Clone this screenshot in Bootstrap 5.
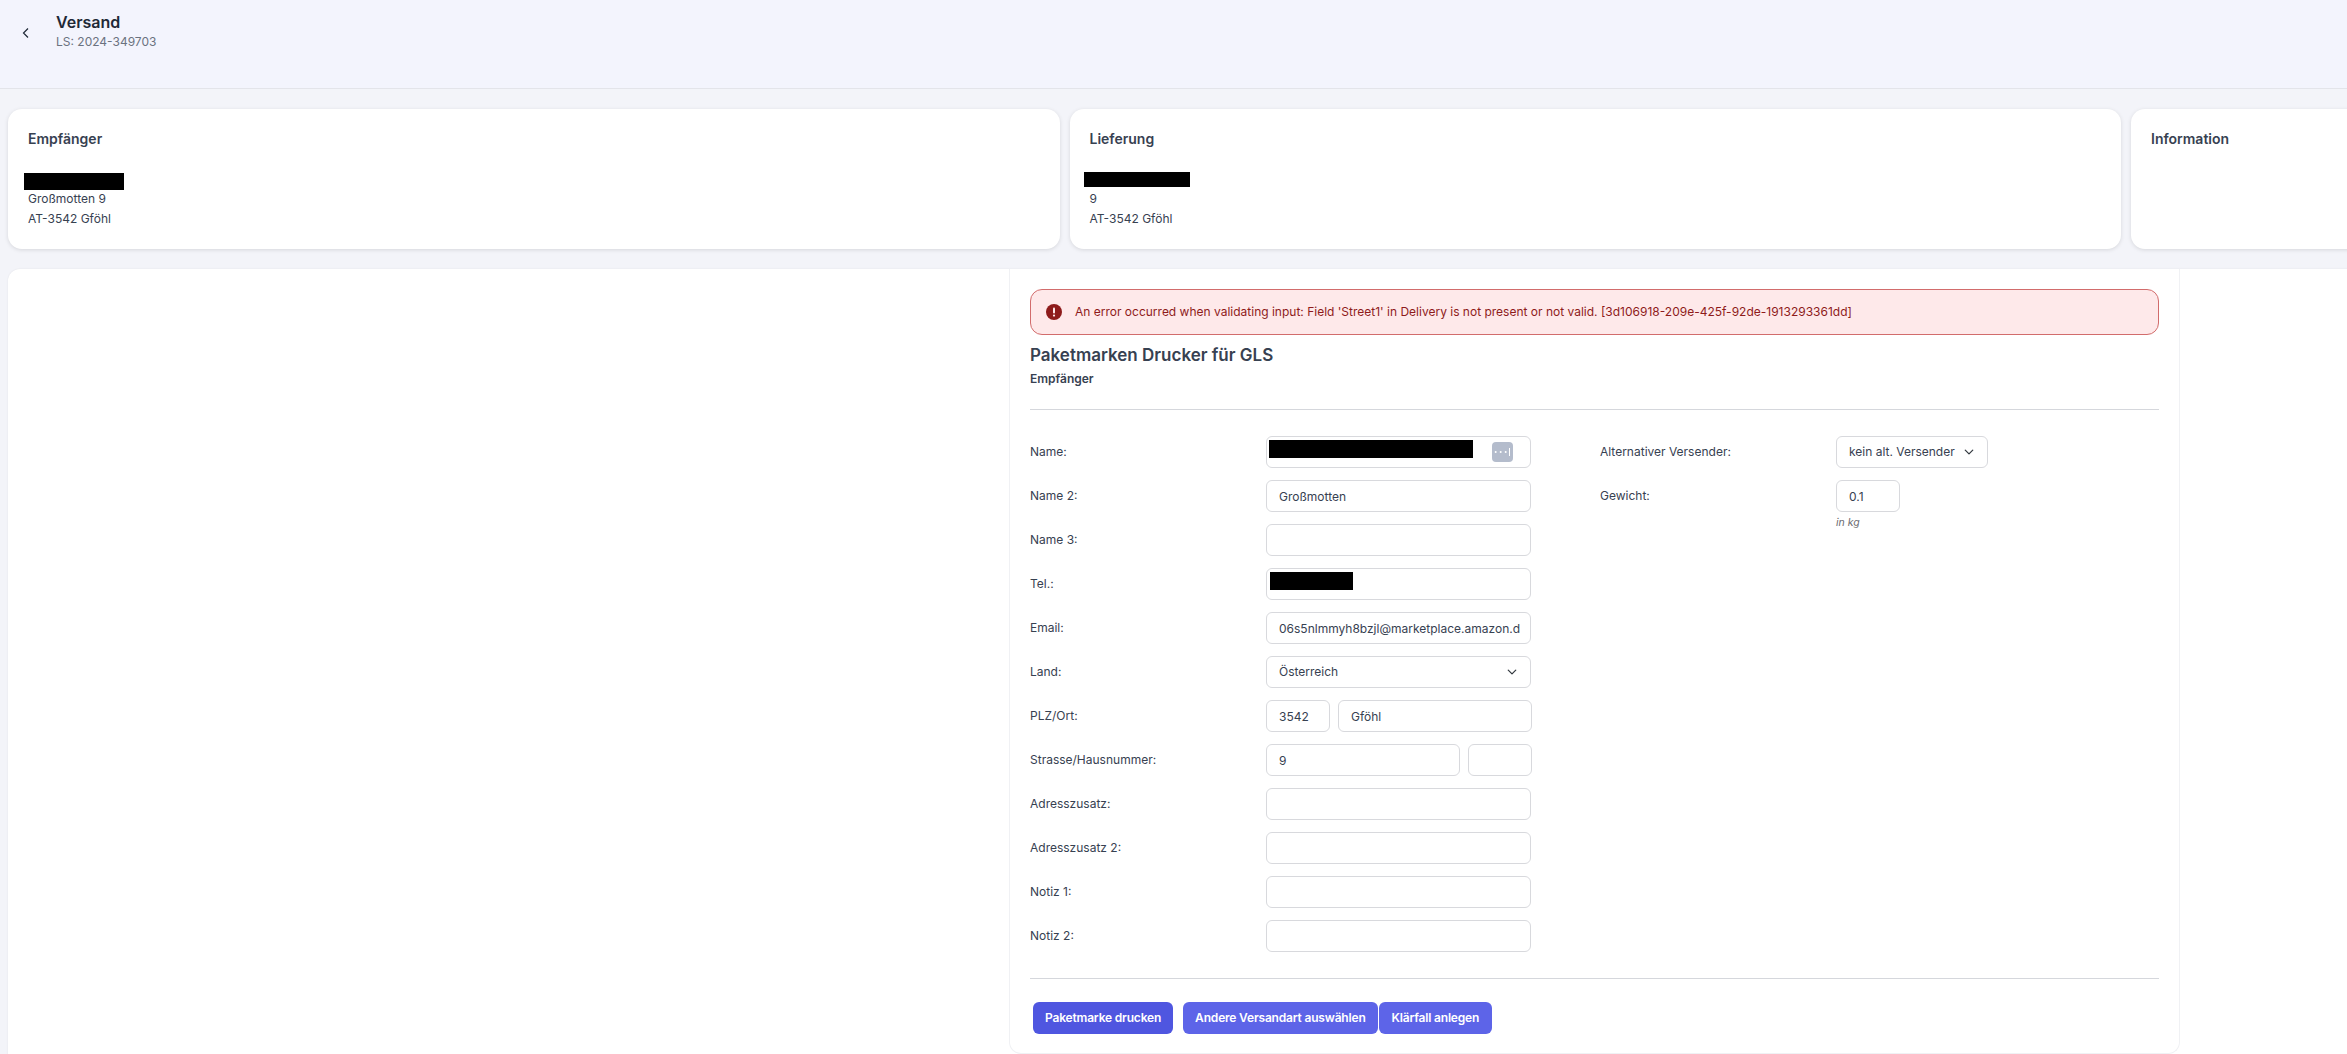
<!DOCTYPE html>
<html lang="de">

<head>
    <meta charset="UTF-8">
    <title>Versand</title>
    <link rel="stylesheet" href="https://cdn.jsdelivr.net/npm/bootstrap@5.3.0/dist/css/bootstrap.min.css">
    <style>
        body {
            background-color: #f3f4f9;
            color: #374151;
            font-family: Inter, "Liberation Sans", sans-serif;
            font-size: 12px;
            height: 1054px;
            overflow: hidden;
        }

        .top-bar {
            height: 89px;
            background-color: #f3f4fd;
            border-bottom: 1px solid #e3e4ea;
            padding: 12px 0 0 20px;
        }

        .top-back {
            width: 36px;
            padding-top: 11px;
            color: #1f2937;
        }

        .top-title {
            font-size: 16px;
            font-weight: 600;
            line-height: 20px;
            color: #1f2937;
        }

        .top-sub {
            font-size: 12px;
            line-height: 18px;
            margin-top: 1px;
            color: #6b7280;
        }

        .info-row {
            padding: 20px 8px;
            gap: 10px;
            width: 3300px;
        }

        .info-card {
            flex: 0 0 1051.5px;
            height: 140px;
            border: 0;
            border-radius: 14px;
            box-shadow: 0 1px 4px rgba(0, 0, 0, .12);
            padding: 20px;
            position: relative;
        }

        .info-title {
            font-size: 14px;
            font-weight: 600;
            line-height: 20px;
            color: #374151;
            margin-bottom: 40px;
        }

        .info-line {
            line-height: 20px;
            color: #374151;
        }

        .black-box {
            position: absolute;
            background-color: #000;
        }

        .box-a {
            left: 16px;
            top: 64px;
            width: 100px;
            height: 17px;
        }

        .box-b {
            left: 14px;
            top: 63px;
            width: 106px;
            height: 15px;
        }

        .box-name {
            left: 3px;
            top: 4px;
            width: 204px;
            height: 18px;
        }

        .box-tel {
            left: 4px;
            top: 4px;
            width: 83px;
            height: 18px;
        }

        .main-panel {
            margin: 0 0 0 8px;
            width: 2400px;
            background-color: #fff;
            border-radius: 12px 12px 0 0;
            height: 790px;
            padding-left: 1001px;
            box-shadow: 0 0 2px rgba(0, 0, 0, .08);
        }

        .form-panel {
            width: 1171px;
            height: 785px;
            padding: 20px;
            border: 1px solid #f0f1f4;
            border-top: 0;
            border-radius: 0 0 12px 12px;
        }

        .error-box {
            height: 46px;
            margin: 0;
            padding: 0 0 0 15px;
            background-color: #fee9ea;
            border: 1px solid #d26c6c;
            border-radius: 12px;
            color: #8e1b1b;
            font-size: 12px;
            gap: 13px;
        }

        .form-title {
            font-size: 17px;
            font-weight: 600;
            line-height: 24px;
            color: #374151;
            margin: 8px 0 0;
        }

        .form-sub {
            font-size: 12px;
            font-weight: 600;
            line-height: 18px;
            color: #374151;
            margin-top: 3px;
        }

        .line-a {
            margin: 21px 0 26px;
            border-color: #d5d7dc;
            opacity: 1;
        }

        .line-b {
            margin: 26px 0 23px;
            border-color: #d5d7dc;
            opacity: 1;
        }

        .field-col {
            width: 501px;
            gap: 12px;
        }

        .side-col {
            margin-left: 69px;
            gap: 12px;
        }

        .field-label {
            flex: 0 0 236px;
            line-height: 31px;
            color: #374151;
        }

        .field-wrap {
            flex: 0 0 265px;
            gap: 8px;
            position: relative;
        }

        .field-wrap.wrap-split {
            flex-basis: 266px;
        }

        .form-control.field-input,
        .form-select.field-input {
            height: 32px;
            min-height: 32px;
            padding: 0 8px 0 12px;
            border: 1px solid #d8d9dd;
            border-radius: 6px;
            font-size: 12px;
            line-height: 30px;
            color: #374151;
        }

        .form-select.field-input {
            background-position: right 12px center;
            background-size: 12px 10px;
            padding-right: 30px;
        }

        .w-short {
            flex: 0 0 64px;
            width: 64px;
        }

        .w-alt {
            width: 152px;
        }

        .dots-btn {
            position: absolute;
            right: 18px;
            top: 6px;
            width: 21px;
            height: 20px;
            background-color: #b4bccc;
            border-radius: 4px;
        }

        .hint-text {
            font-size: 10.5px;
            font-style: italic;
            color: #6b6b70;
            line-height: 14px;
            margin-top: 4px;
        }

        .action-btn {
            height: 32px;
            padding: 0 12px;
            border: 0;
            border-radius: 6px;
            font-size: 12px;
            font-weight: 600;
            letter-spacing: -.18px;
            line-height: 32px;
            color: #fff;
            background-color: #5d64e8;
        }

        .action-main {
            background-color: #4f56e0;
            margin: 0 10px 0 3px;
        }

        .action-last {
            margin-left: 1px;
            padding: 0 13px;
        }
    </style>
</head>

<body>
    <div class="top-bar d-flex">
        <div class="top-back">
            <svg width="12" height="14" viewBox="0 0 12 14" fill="none" stroke="currentColor" stroke-width="1.2">
                <path d="M8 2.5 3.5 7 8 11.5" />
            </svg>
        </div>
        <div>
            <div class="top-title">Versand</div>
            <div class="top-sub">LS: 2024-349703</div>
        </div>
    </div>

    <div class="info-row d-flex">
        <div class="card info-card">
            <div class="info-title">Empfänger</div>
            <div class="info-line">Großmotten 9</div>
            <div class="info-line">AT-3542 Gföhl</div>
            <div class="black-box box-a"></div>
        </div>
        <div class="card info-card">
            <div class="info-title">Lieferung</div>
            <div class="info-line">9</div>
            <div class="info-line">AT-3542 Gföhl</div>
            <div class="black-box box-b"></div>
        </div>
        <div class="card info-card">
            <div class="info-title">Information</div>
        </div>
    </div>

    <div class="main-panel">
        <div class="form-panel">
            <div class="alert alert-danger error-box d-flex align-items-center">
                <svg width="16" height="16" viewBox="0 0 16 16">
                    <circle cx="8" cy="8" r="8" fill="#8e1b1b" />
                    <rect x="7" y="3.5" width="2" height="6" rx="1" fill="#fee8e9" />
                    <circle cx="8" cy="11.6" r="1.1" fill="#fee8e9" />
                </svg>
                <span>An error occurred when validating input: Field 'Street1' in Delivery is not present or not valid. [3d106918-209e-425f-92de-1913293361dd]</span>
            </div>

            <h2 class="form-title">Paketmarken Drucker für GLS</h2>
            <div class="form-sub">Empfänger</div>
            <hr class="line-a">

            <div class="d-flex">
                <div class="field-col d-flex flex-column">
                    <div class="d-flex">
                        <label class="field-label">Name:</label>
                        <div class="field-wrap d-flex">
                            <input class="form-control field-input" type="text">
                            <div class="black-box box-name"></div>
                            <div class="dots-btn d-flex align-items-center justify-content-center">
                                <svg width="17" height="10" viewBox="0 0 17 10" fill="#fff">
                                    <circle cx="1.7" cy="5" r="1" />
                                    <circle cx="6.7" cy="5" r="1" />
                                    <circle cx="11.7" cy="5" r="1" />
                                    <rect x="15" y="1" width="1" height="8" />
                                </svg>
                            </div>
                        </div>
                    </div>
                    <div class="d-flex">
                        <label class="field-label">Name 2:</label>
                        <div class="field-wrap d-flex"><input class="form-control field-input" type="text" value="Großmotten"></div>
                    </div>
                    <div class="d-flex">
                        <label class="field-label">Name 3:</label>
                        <div class="field-wrap d-flex"><input class="form-control field-input" type="text"></div>
                    </div>
                    <div class="d-flex">
                        <label class="field-label">Tel.:</label>
                        <div class="field-wrap d-flex">
                            <input class="form-control field-input" type="text">
                            <div class="black-box box-tel"></div>
                        </div>
                    </div>
                    <div class="d-flex">
                        <label class="field-label">Email:</label>
                        <div class="field-wrap d-flex"><input class="form-control field-input" type="text" value="06s5nlmmyh8bzjl@marketplace.amazon.d"></div>
                    </div>
                    <div class="d-flex">
                        <label class="field-label">Land:</label>
                        <div class="field-wrap d-flex">
                            <select class="form-select field-input">
                                <option>Österreich</option>
                            </select>
                        </div>
                    </div>
                    <div class="d-flex">
                        <label class="field-label">PLZ/Ort:</label>
                        <div class="field-wrap wrap-split d-flex">
                            <input class="form-control field-input w-short" type="text" value="3542">
                            <input class="form-control field-input" type="text" value="Gföhl">
                        </div>
                    </div>
                    <div class="d-flex">
                        <label class="field-label">Strasse/Hausnummer:</label>
                        <div class="field-wrap wrap-split d-flex">
                            <input class="form-control field-input" type="text" value="9">
                            <input class="form-control field-input w-short" type="text">
                        </div>
                    </div>
                    <div class="d-flex">
                        <label class="field-label">Adresszusatz:</label>
                        <div class="field-wrap d-flex"><input class="form-control field-input" type="text"></div>
                    </div>
                    <div class="d-flex">
                        <label class="field-label">Adresszusatz 2:</label>
                        <div class="field-wrap d-flex"><input class="form-control field-input" type="text"></div>
                    </div>
                    <div class="d-flex">
                        <label class="field-label">Notiz 1:</label>
                        <div class="field-wrap d-flex"><input class="form-control field-input" type="text"></div>
                    </div>
                    <div class="d-flex">
                        <label class="field-label">Notiz 2:</label>
                        <div class="field-wrap d-flex"><input class="form-control field-input" type="text"></div>
                    </div>
                </div>

                <div class="side-col d-flex flex-column">
                    <div class="d-flex">
                        <label class="field-label">Alternativer Versender:</label>
                        <select class="form-select field-input w-alt">
                            <option>kein alt. Versender</option>
                        </select>
                    </div>
                    <div class="d-flex">
                        <label class="field-label">Gewicht:</label>
                        <div>
                            <input class="form-control field-input w-short" type="text" value="0.1">
                            <div class="hint-text">in kg</div>
                        </div>
                    </div>
                </div>
            </div>

            <hr class="line-b">

            <div class="d-flex">
                <button class="btn btn-primary action-btn action-main" type="button">Paketmarke drucken</button>
                <button class="btn btn-primary action-btn" type="button">Andere Versandart auswählen</button>
                <button class="btn btn-primary action-btn action-last" type="button">Klärfall anlegen</button>
            </div>
        </div>
    </div>

    <script src="https://cdn.jsdelivr.net/npm/bootstrap@5.3.0/dist/js/bootstrap.bundle.min.js"></script>
</body>

</html>
